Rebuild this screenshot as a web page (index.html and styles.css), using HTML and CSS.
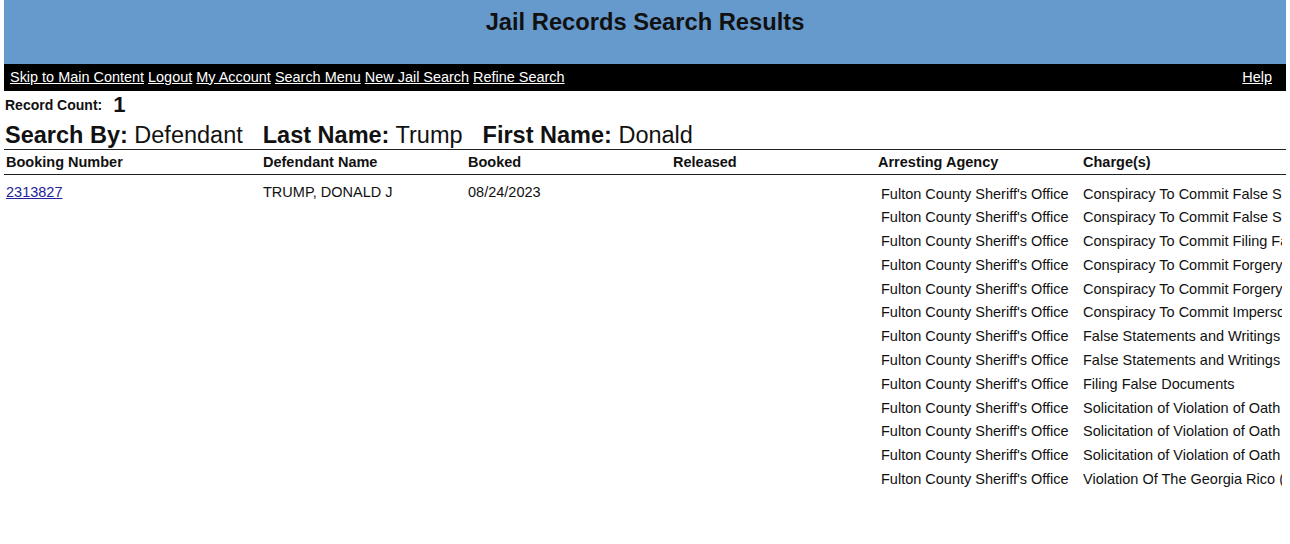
FILE: index.html
```html
<!DOCTYPE html>
<html lang="en">
<head>
    <meta charset="UTF-8">
    <title>Jail Records Search Results</title>
    <link rel="stylesheet" href="styles.css">
</head>
<body>

    <div class="banner">
        <h1>Jail Records Search Results</h1>
    </div>

    <!-- top navigation -->
    <div class="nav-bar">
        <div class="nav-left">
            <a href="#main">Skip to Main Content</a>
            <a href="#">Logout</a>
            <a href="#">My Account</a>
            <a href="#">Search Menu</a>
            <a href="#">New Jail Search</a>
            <a href="#">Refine Search</a>
        </div>
        <a href="#">Help</a>
    </div>

    <div class="record-count">
        <span class="label">Record Count:</span>
        <span class="count">1</span>
    </div>

    <div class="search-by" id="main">
        <span><b>Search By:</b> Defendant</span>
        <span><b>Last Name:</b> Trump</span>
        <span><b>First Name:</b> Donald</span>
    </div>

    <table class="results">
        <colgroup>
            <col class="col-first">
            <col class="col">
            <col class="col">
            <col class="col">
            <col class="col">
            <col class="col">
        </colgroup>
        <thead>
            <tr>
                <th>Booking Number</th>
                <th>Defendant Name</th>
                <th>Booked</th>
                <th>Released</th>
                <th>Arresting Agency</th>
                <th>Charge(s)</th>
            </tr>
        </thead>
        <tbody>
            <tr>
                <td class="main-cell"><a href="#">2313827</a></td>
                <td class="main-cell">TRUMP, DONALD J</td>
                <td class="main-cell">08/24/2023</td>
                <td class="main-cell"></td>
                <td class="agency">
                    <div>Fulton County Sheriff's Office</div>
                    <div>Fulton County Sheriff's Office</div>
                    <div>Fulton County Sheriff's Office</div>
                    <div>Fulton County Sheriff's Office</div>
                    <div>Fulton County Sheriff's Office</div>
                    <div>Fulton County Sheriff's Office</div>
                    <div>Fulton County Sheriff's Office</div>
                    <div>Fulton County Sheriff's Office</div>
                    <div>Fulton County Sheriff's Office</div>
                    <div>Fulton County Sheriff's Office</div>
                    <div>Fulton County Sheriff's Office</div>
                    <div>Fulton County Sheriff's Office</div>
                    <div>Fulton County Sheriff's Office</div>
                </td>
                <td class="charges">
                    <div>Conspiracy To Commit False Statements and Writings</div>
                    <div>Conspiracy To Commit False Statements and Writings</div>
                    <div>Conspiracy To Commit Filing False Documents</div>
                    <div>Conspiracy To Commit Forgery In The First Degree</div>
                    <div>Conspiracy To Commit Forgery In The First Degree</div>
                    <div>Conspiracy To Commit Impersonating A Public Officer</div>
                    <div>False Statements and Writings</div>
                    <div>False Statements and Writings</div>
                    <div>Filing False Documents</div>
                    <div>Solicitation of Violation of Oath by Public Officer</div>
                    <div>Solicitation of Violation of Oath by Public Officer</div>
                    <div>Solicitation of Violation of Oath by Public Officer</div>
                    <div>Violation Of The Georgia Rico (Racketeer Influenced And Corrupt Organizations) Act</div>
                </td>
            </tr>
        </tbody>
    </table>

</body>
</html>
```

FILE: styles.css
```css
* {
    box-sizing: border-box;
    margin: 0;
    padding: 0;
}

body {
    margin: 0 4px;
    font-family: "Liberation Sans", Arial, sans-serif;
    color: #111;
    background: #fff;
}

/* Blue title banner */
.banner {
    height: 64px;
    background-color: #6699cc;
    padding-top: 9px;
}

h1 {
    text-align: center;
    font-size: 23.7px;
    font-weight: bold;
    color: #111;
}

/* Black link bar */
.nav-bar {
    display: flex;
    justify-content: space-between;
    align-items: center;
    height: 27px;
    background-color: #000;
    padding: 0 14px 2px 6px;
    font-size: 14.45px;
}

.nav-bar a {
    color: #fff;
}

.record-count {
    display: flex;
    align-items: center;
    gap: 11px;
    padding: 0 0 3px 1px;
    height: 31px;
}

.record-count .label {
    font-size: 14px;
    font-weight: bold;
}

.record-count .count {
    font-size: 22px;
    font-weight: bold;
}

.search-by {
    display: flex;
    gap: 20px;
    font-size: 23.5px;
    line-height: 27px;
    padding-left: 1px;
    border-bottom: 1px solid #222;
}

/* Results table */
.results {
    width: 100%;
    table-layout: fixed;
    border-collapse: collapse;
    font-size: 14.5px;
}

.col-first {
    width: 257px;
}

.col {
    width: 205px;
}

.results th {
    text-align: left;
    font-weight: bold;
    height: 24px;
    padding: 0 2px;
    border-bottom: 1px solid #222;
}

.results td {
    vertical-align: top;
    padding: 8px 2px 0;
}

.results td.main-cell {
    padding-top: 6px;
    line-height: 23.8px;
}

.results a {
    color: #22229a;
}

.results td.agency {
    padding-left: 5px;
}

.results td.agency div,
.results td.charges div {
    line-height: 23.8px;
    white-space: nowrap;
}

.results td.charges {
    padding-right: 4px;
    overflow: hidden;
}

.results td.charges div {
    overflow: hidden;
}
```
